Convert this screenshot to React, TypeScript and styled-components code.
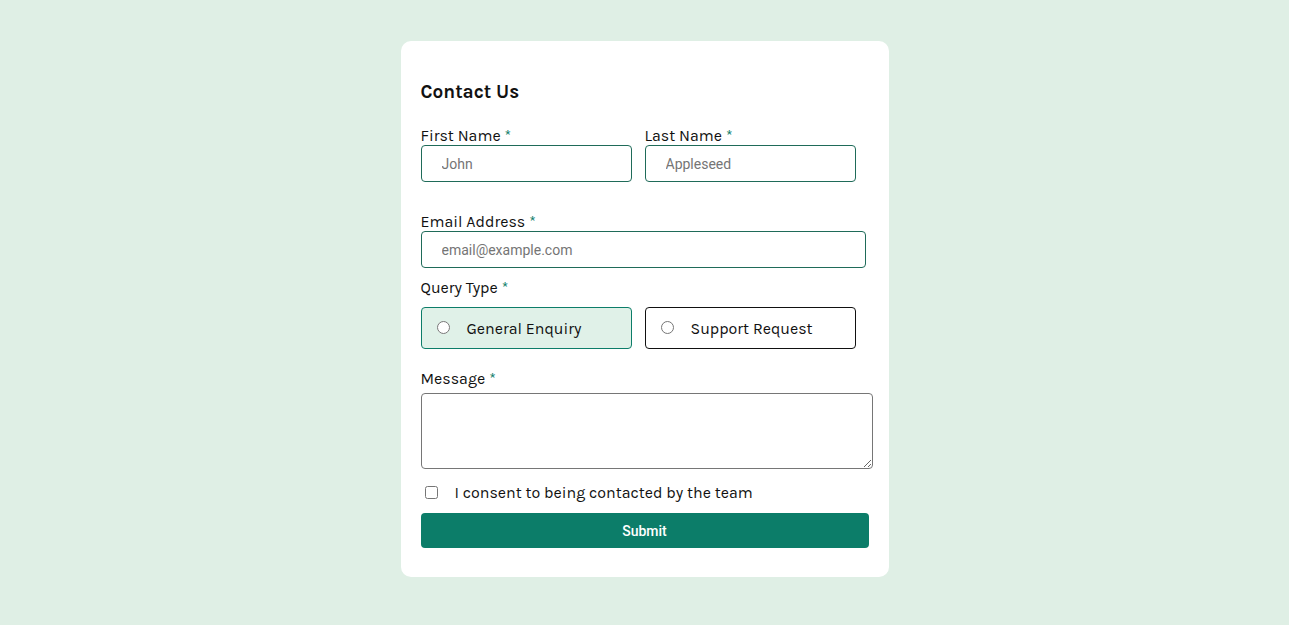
import React from 'react';
import styled, {createGlobalStyle} from 'styled-components';

const GlobalStyle = createGlobalStyle`
html, body {
  margin: 0;
  padding: 0;
  background: #dfefe5;
}
body {
  font-family: "Karla", "Noto Sans", "Liberation Sans", sans-serif;
  color: #111;
}
`;

const Page = styled.div`
min-height: 625px;
display: flex;
justify-content: center;
align-items: flex-start;
padding-top: 41px;
box-sizing: border-box;
`;

const Card = styled.form`
width: 488px;
height: 536px;
box-sizing: border-box;
background: #fff;
border-radius: 10px;
padding: 39px 16px 0 20px;
display: flex;
flex-direction: column;
`;

const Title = styled.h1`
margin: 0 0 24px 0;
font-size: 19px;
font-weight: 700;
line-height: 24px;
color: #111;
`;

const Row = styled.div<{ $mt?: number }>`
display: flex;
gap: 13px;
margin-top: ${p => p.$mt ?? 0}px;
`;

const Field = styled.div<{ $mb?: number }>`
display: flex;
flex-direction: column;
margin-bottom: ${p => p.$mb ?? 0}px;
`;

const Label = styled.label`
font-size: 16px;
line-height: 15px;
padding-bottom: 2px;
color: #111;
`;

const Star = styled.span`
color: #0c7d69;
margin-left: 4px;
`;

const TextInput = styled.input<{ $w: number }>`
width: ${p => p.$w}px;
height: 37px;
box-sizing: border-box;
border: 1px solid #1f6b59;
border-radius: 4px;
padding: 0 20px;
font-family: Roboto, "Liberation Sans", sans-serif;
font-size: 14px;
color: #333;
&::placeholder { color: #757575; }
`;

const RadioBox = styled.label<{ $active?: boolean }>`
width: 211px;
height: 42px;
box-sizing: border-box;
border: 1px solid ${p => p.$active ? '#0c7d69' : '#111'};
background: ${p => p.$active ? '#e0f1e8' : '#fff'};
border-radius: 4px;
display: flex;
align-items: center;
padding-left: 12px;
font-size: 16px;
color: #111;
input { margin: 0 17px 2px 3px; width: 13px; height: 13px; }
`;

const TextArea = styled.textarea`
width: 452px;
height: 76px;
margin-top: 5px;
box-sizing: border-box;
border: 1px solid #767676;
border-radius: 4px;
font-family: Roboto, "Liberation Sans", sans-serif;
`;

const Consent = styled.label`
display: flex;
align-items: center;
margin: 14px 0 10px 0;
font-size: 16px;
line-height: 20px;
input { margin: 0 17px 2px 4px; width: 13px; height: 13px; }
`;

const SubmitButton = styled.button`
width: 448px;
height: 35px;
border: none;
border-radius: 4px;
background: #0c7d69;
color: #fff;
font-family: Roboto, "Liberation Sans", sans-serif;
font-size: 14px;
font-weight: 500;
`;

export default function App() {
  return (
    <>
      <GlobalStyle/>
      <Page>
        <Card onSubmit={e => e.preventDefault()}>
          <Title>Contact Us</Title>
          <Row>
            <Field $mb={32}>
              <Label>First Name<Star>*</Star></Label>
              <TextInput $w={211} placeholder="John"/>
            </Field>
            <Field $mb={32}>
              <Label>Last Name<Star>*</Star></Label>
              <TextInput $w={211} placeholder="Appleseed"/>
            </Field>
          </Row>
          <Field $mb={12}>
            <Label>Email Address<Star>*</Star></Label>
            <TextInput $w={445} placeholder="email@example.com"/>
          </Field>
          <Field $mb={22}>
            <Label>Query Type<Star>*</Star></Label>
            <Row $mt={10}>
              <RadioBox $active><input type="radio" name="q"/>General Enquiry</RadioBox>
              <RadioBox><input type="radio" name="q"/>Support Request</RadioBox>
            </Row>
          </Field>
          <Field>
            <Label>Message<Star>*</Star></Label>
            <TextArea/>
          </Field>
          <Consent><input type="checkbox"/>I consent to being contacted by the team</Consent>
          <SubmitButton type="submit">Submit</SubmitButton>
        </Card>
      </Page>
    </>
  );
}
